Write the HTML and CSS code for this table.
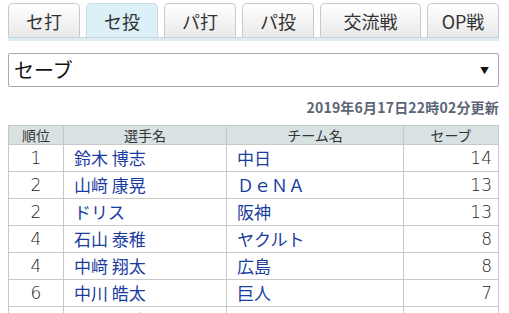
FILE: index.html
```html
<!DOCTYPE html>
<html lang="ja">
<head>
<meta charset="utf-8">
<link rel="stylesheet" href="styles.css">
</head>
<body>
<div class="page">
  <nav class="tabs">
    <a class="tab">セ打</a>
    <a class="tab active">セ投</a>
    <a class="tab">パ打</a>
    <a class="tab">パ投</a>
    <a class="tab wide">交流戦</a>
    <a class="tab">OP戦</a>
  </nav>
  <div class="tabbar"></div>
  <div class="select">
    <span class="select-text">セーブ</span>
    <span class="arrow">▼</span>
  </div>
  <div class="updated">2019年6月17日22時02分更新</div>
  <table class="rank">
    <thead>
      <tr><th class="c-rank">順位</th><th class="c-name">選手名</th><th class="c-team">チーム名</th><th class="c-val">セーブ</th></tr>
    </thead>
    <tbody>
      <tr><td class="num center">1</td><td class="link">鈴木 博志</td><td class="link">中日</td><td class="num right">14</td></tr>
      <tr><td class="num center">2</td><td class="link">山﨑 康晃</td><td class="link">ＤｅＮＡ</td><td class="num right">13</td></tr>
      <tr><td class="num center">2</td><td class="link">ドリス</td><td class="link">阪神</td><td class="num right">13</td></tr>
      <tr><td class="num center">4</td><td class="link">石山 泰稚</td><td class="link">ヤクルト</td><td class="num right">8</td></tr>
      <tr><td class="num center">4</td><td class="link">中﨑 翔太</td><td class="link">広島</td><td class="num right">8</td></tr>
      <tr><td class="num center">6</td><td class="link">中川 皓太</td><td class="link">巨人</td><td class="num right">7</td></tr>
      <tr><td class="num center">7</td><td class="link">ロドリゲス</td><td class="link">巨人</td><td class="num right">5</td></tr>
    </tbody>
  </table>
</div>
</body>
</html>
```

FILE: styles.css
```css
html, body {
  margin: 0;
  padding: 0;
  background: #fff;
  font-family: "Noto Sans CJK JP", "Noto Sans", sans-serif;
  color: #222;
  overflow: hidden;
}
.page {
  padding: 3px 10px 0 8px;
}
.tabs {
  display: flex;
  gap: 6px;
}
.tab {
  box-sizing: border-box;
  width: 72px;
  height: 34px;
  border: 1px solid #c9c9c9;
  border-bottom: none;
  border-radius: 5px 5px 0 0;
  background: linear-gradient(#ffffff, #e9e9e9);
  display: flex;
  align-items: center;
  justify-content: center;
  font-size: 18px;
  color: #333;
  line-height: 1;
}
.tab.wide { width: 101px; }
.tab.active {
  background: #dcf0f8;
  border-color: #c6dbe4;
}
.tabbar {
  height: 3px;
  background: #dcecf2;
  border-top: 1px solid #c5d6de;
}
.select {
  box-sizing: border-box;
  margin-top: 12px;
  height: 34px;
  border: 1px solid #a9a9a9;
  border-radius: 2px;
  display: flex;
  align-items: center;
  justify-content: space-between;
  padding: 0 9px 0 5px;
}
.select-text {
  font-size: 20px;
  color: #111;
  line-height: 1;
}
.arrow {
  font-size: 9px;
  color: #111;
}
.updated {
  text-align: right;
  font-size: 14px;
  font-weight: bold;
  color: #5c6575;
  letter-spacing: 0.2px;
  margin-top: 9px;
  height: 22px;
  line-height: 22px;
}
.rank {
  margin-top: 7px;
  width: 491px;
  border-collapse: collapse;
  table-layout: fixed;
}
.rank th, .rank td {
  border: 1px solid #c8c8c8;
  padding: 0;
}
.rank th {
  background: #d9e2e2;
  font-weight: normal;
  font-size: 14px;
  color: #333;
  height: 18px;
  line-height: 18px;
}
.c-rank { width: 54px; }
.c-name { width: 162px; }
.c-team { width: 176px; }
.rank td {
  height: 26px;
  font-size: 17px;
  line-height: 26px;
}
.link {
  color: #1a3ca0;
  padding-left: 10px !important;
  white-space: nowrap;
}
.num {
  color: #222;
  font-weight: 200;
  font-family: "DejaVu Sans", sans-serif;
  font-size: 17px;
}
.center { text-align: center; }
.right { text-align: right; padding-right: 6px !important; }
```
